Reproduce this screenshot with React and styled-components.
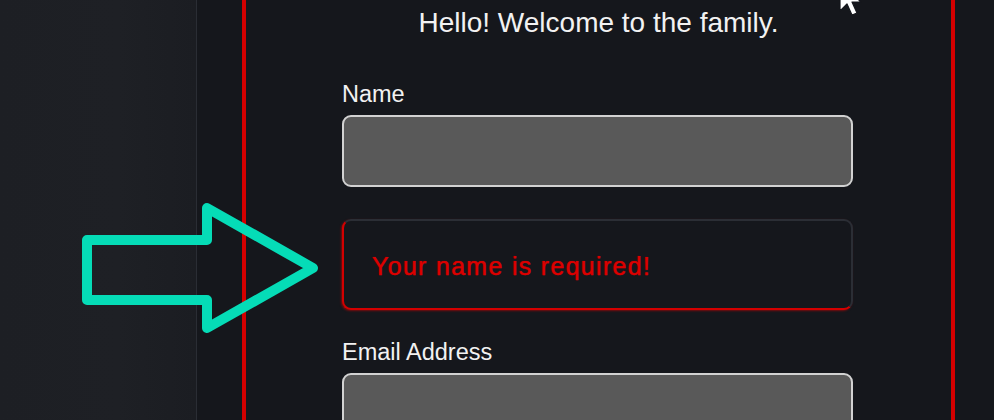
import React from "react";
import styled, { createGlobalStyle } from "styled-components";

const GlobalStyle = createGlobalStyle`
  html, body {
    margin: 0;
    padding: 0;
    background: #15171c;
    overflow: hidden;
  }
  body {
    font-family: "Liberation Sans", Arial, sans-serif;
  }
`;

const Page = styled.div`
  position: relative;
  display: flex;
  width: 994px;
  height: 420px;
  overflow: hidden;
  background: #15171c;
`;

const Sidebar = styled.div`
  width: 196px;
  flex-shrink: 0;
  border-right: 1px solid #2a2d34;
  background: linear-gradient(90deg, #1d1f24 0%, #1e2025 60%, #1b1d22 100%);
`;

const Gutter = styled.div`
  width: 45px;
  flex-shrink: 0;
  background: #15171c;
`;

const Panel = styled.main`
  width: 705px;
  flex-shrink: 0;
  border-left: 4px solid #d40000;
  border-right: 4px solid #d40000;
  background: #15171c;
  display: flex;
  flex-direction: column;
`;

const Title = styled.h1`
  margin: 7px 0 0;
  font-size: 28px;
  line-height: 32px;
  font-weight: 400;
  color: #f2f2f2;
  text-align: center;
`;

const Form = styled.form`
  margin: 41px 0 0 96px;
  width: 511px;
  display: flex;
  flex-direction: column;
`;

const Label = styled.label`
  font-size: 23.5px;
  line-height: 28px;
  color: #f2f2f2;
  margin-top: ${(p) => p.$top || 0}px;
`;

const Input = styled.div`
  margin-top: 7px;
  height: 68px;
  border: 2px solid #d2d2d2;
  border-radius: 9px;
  background: #595959;
`;

const ErrorBox = styled.div`
  margin-top: 32px;
  height: 91px;
  box-sizing: border-box;
  display: flex;
  align-items: center;
  padding: 3px 0 0 28px;
  border: 2px solid;
  border-color: #2b2e35 #2b2e35 #d40000 #d40000;
  border-radius: 9px;
  box-shadow: -1px 1px 2px rgba(220, 0, 0, 0.5);
  background: #15171c;
`;

const ErrorText = styled.span`
  font-size: 25px;
  letter-spacing: 1.3px;
  color: #dc0000;
  -webkit-text-stroke: 0.25px #dc0000;
  text-shadow: 0 0 1px rgba(230, 0, 0, 0.7);
`;

const Arrow = styled.svg`
  position: absolute;
  left: 0;
  top: 0;
  pointer-events: none;
`;

const Cursor = styled.svg`
  position: absolute;
  left: 839px;
  top: -19px;
`;

export default function App() {
  return (
    <>
      <GlobalStyle />
      <Page>
        <Sidebar />
        <Gutter />
        <Panel>
          <Title>Hello! Welcome to the family.</Title>
          <Form>
            <Label>Name</Label>
            <Input />
            <ErrorBox>
              <ErrorText>Your name is required!</ErrorText>
            </ErrorBox>
            <Label $top={28}>Email Address</Label>
            <Input />
          </Form>
        </Panel>
        <Arrow width="340" height="360" viewBox="0 0 340 360">
          <polygon
            points="87,240 207,240 207,208 313,268 207,328 207,300 87,300"
            fill="none"
            stroke="#05dcb7"
            strokeWidth="10"
            strokeLinejoin="round"
          />
        </Arrow>
        <Cursor width="26" height="38" viewBox="0 0 26 38">
          <path
            d="M1 1 L1 30 L8 23 L13 34 L18 32 L13 21 L22 21 Z"
            fill="#ffffff"
            stroke="#15171c"
            strokeWidth="1.2"
            strokeLinejoin="round"
          />
        </Cursor>
      </Page>
    </>
  );
}
